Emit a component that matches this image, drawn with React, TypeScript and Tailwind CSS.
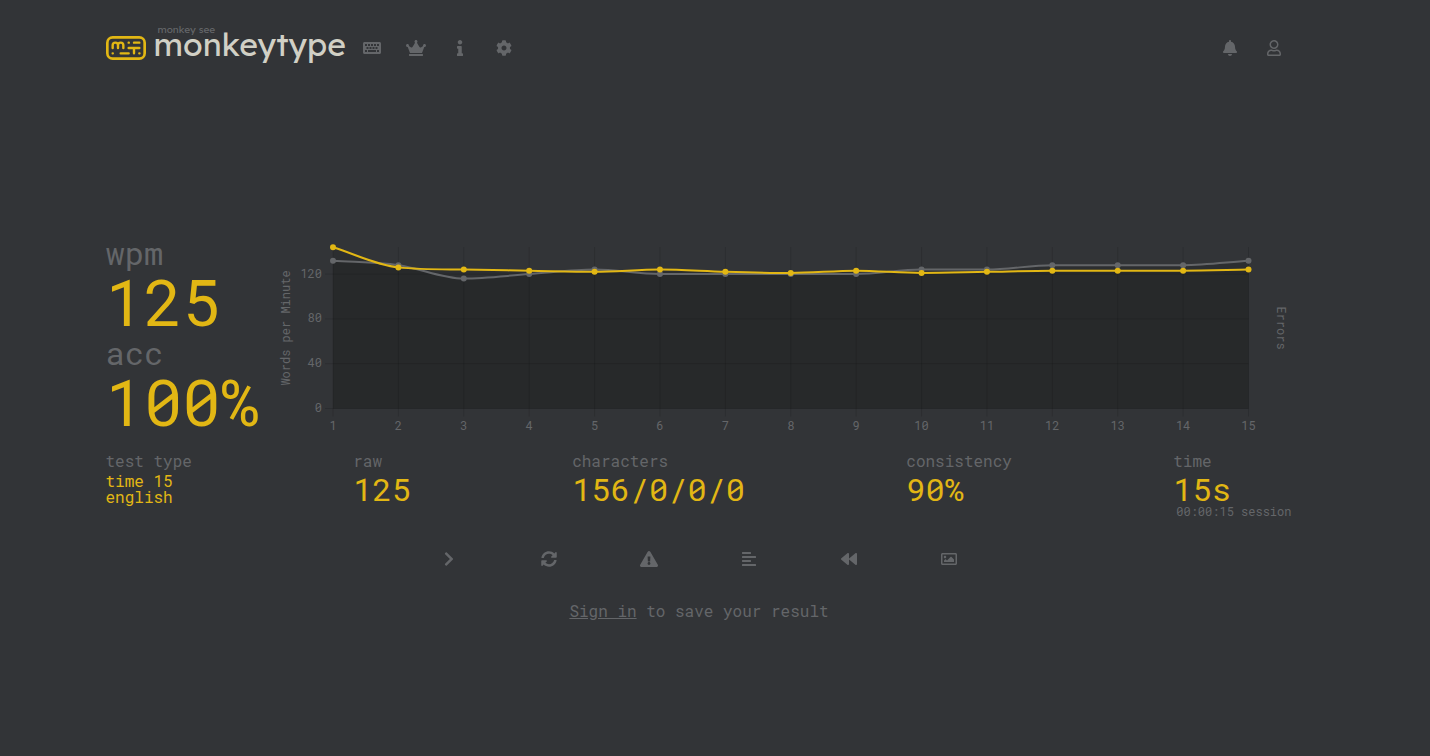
import { FaAlignLeft, FaBackward, FaBell, FaChevronRight, FaCog, FaCrown, FaExclamationTriangle, FaInfo, FaKeyboard, FaRegImage, FaRegUser, FaSyncAlt } from "react-icons/fa";
import type { IconType } from "react-icons";

interface NavItem {
  label: string;
  icon: IconType;
}

const mainNav: NavItem[] = [
  { label: "Start test", icon: FaKeyboard },
  { label: "Leaderboards", icon: FaCrown },
  { label: "About", icon: FaInfo },
  { label: "Settings", icon: FaCog }
];

const accountNav: NavItem[] = [
  { label: "Notifications", icon: FaBell },
  { label: "Account", icon: FaRegUser }
];

const actions: NavItem[] = [
  { label: "Next test", icon: FaChevronRight },
  { label: "Repeat test", icon: FaSyncAlt },
  { label: "Practice words", icon: FaExclamationTriangle },
  { label: "Toggle words history", icon: FaAlignLeft },
  { label: "Watch replay", icon: FaBackward },
  { label: "Copy screenshot", icon: FaRegImage }
];

const wpm = [144, 126, 124, 123, 122, 124, 122, 121, 123, 121, 122, 123, 123, 123, 124];
const raw = [132, 128, 116, 120, 124, 120, 120, 120, 120, 124, 124, 128, 128, 128, 132];

// Plot area inside the chart's viewBox
const LEFT = 57;
const RIGHT = 972.5;
const TOP = 6;
const BOTTOM = 167.5;

const xAt = (i: number) => LEFT + (i * (RIGHT - LEFT)) / (wpm.length - 1);
const yAt = (value: number) => BOTTOM - value * 1.12;

// Monotone cubic line, so the curve never overshoots a point
function linePath(values: number[]) {
  const step = xAt(1) - xAt(0);
  const ys = values.map(yAt);
  const slopes = ys.slice(1).map((y, i) => (y - ys[i]) / step);
  const tangents = ys.map((_, i) => {
    if (i === 0) return slopes[0];
    if (i === ys.length - 1) return slopes[i - 1];
    const a = slopes[i - 1];
    const b = slopes[i];
    return a * b <= 0 ? 0 : (a + b) / 2;
  });

  slopes.forEach((slope, i) => {
    if (slope === 0) {
      tangents[i] = 0;
      tangents[i + 1] = 0;
      return;
    }
    const alpha = tangents[i] / slope;
    const beta = tangents[i + 1] / slope;
    const size = Math.hypot(alpha, beta);
    if (size > 3) {
      tangents[i] = (alpha * 3 * slope) / size;
      tangents[i + 1] = (beta * 3 * slope) / size;
    }
  });

  let d = `M${xAt(0)},${ys[0]}`;
  for (let i = 1; i < ys.length; i++) {
    d += ` C${xAt(i - 1) + step / 3},${ys[i - 1] + (tangents[i - 1] * step) / 3}`;
    d += ` ${xAt(i) - step / 3},${ys[i] - (tangents[i] * step) / 3} ${xAt(i)},${ys[i]}`;
  }
  return d;
}

function Series({ values, color }: { values: number[]; color: string }) {
  return (
    <g>
      <path d={linePath(values)} fill="none" stroke={color} strokeWidth="2" />
      {values.map((value, i) => (
        <circle key={i} cx={xAt(i)} cy={yAt(value)} r="3" fill={color} />
      ))}
    </g>
  );
}

function ResultChart() {
  const close = `L${RIGHT},${BOTTOM} L${LEFT},${BOTTOM} Z`;

  return (
    <svg viewBox="0 0 1017 200" className="w-full" role="img" aria-label="Words per minute over time">
      <path d={`${linePath(raw)} ${close}`} fill="#0b0b0b" fillOpacity="0.13" />
      <path d={`${linePath(wpm)} ${close}`} fill="#0b0b0b" fillOpacity="0.13" />

      <g stroke="#000" strokeOpacity="0.12">
        {wpm.map((_, i) => (
          <line key={i} x1={xAt(i)} x2={xAt(i)} y1={TOP} y2={BOTTOM + 8} />
        ))}
        {[0, 40, 80, 120].map((tick) => (
          <line key={tick} x1={LEFT - 8} x2={RIGHT} y1={yAt(tick)} y2={yAt(tick)} />
        ))}
      </g>

      <Series values={raw} color="#646669" />
      <Series values={wpm} color="#e2b714" />

      <g fill="#646669" fontSize="12">
        {[0, 40, 80, 120].map((tick) => (
          <text key={tick} x={LEFT - 11} y={yAt(tick) + 3.5} textAnchor="end">{tick}</text>
        ))}
        {wpm.map((_, i) => (
          <text key={i} x={xAt(i)} y="189" textAnchor="middle">{i + 1}</text>
        ))}
        <text transform="translate(14 87) rotate(-90)" textAnchor="middle">Words per Minute</text>
        <text transform="translate(1001 87) rotate(90)" textAnchor="middle">Errors</text>
      </g>
    </svg>
  );
}

function Logo() {
  return (
    <svg viewBox="0 0 300 180" className="h-6 w-10" fill="none" stroke="#e2b714" strokeWidth="18" strokeLinecap="round" strokeLinejoin="round" aria-hidden="true">
      <rect x="10" y="10" width="280" height="160" rx="40" strokeWidth="20" />
      <path d="M50 90V70Q50 50 70 50Q90 50 90 70V90M90 70Q90 50 110 50Q130 50 130 70V90" />
      <path d="M170 50H171M210 50H250M170 90H250M210 90V130M50 130H51M110 130H170M250 130H251" />
    </svg>
  );
}

function Stat({ label, value, note }: { label: string; value: string; note?: string }) {
  return (
    <div>
      <div className="text-base leading-5">{label}</div>
      <div className="text-[32px] leading-9 text-[#e2b714]">{value}</div>
      {note && <div className="pl-[3px] pr-px text-xs leading-2">{note}</div>}
    </div>
  );
}

function IconButton({ item, className }: { item: NavItem; className: string }) {
  const Icon = item.icon;
  return (
    <button type="button" aria-label={item.label} className={`flex items-center justify-center ${className}`}>
      <Icon className="h-4 w-5" />
    </button>
  );
}

export default function App() {
  return (
    <div className="min-h-screen bg-[#323437] pr-8 font-['Roboto_Mono','DejaVu_Sans_Mono',monospace] text-[#646669]">
      <div className="mx-auto max-w-[1187px]">
        <header className="flex items-center gap-[7px] pt-6">
          <a href="#" className="flex items-end gap-2 font-['Lexend_Deca',Inter,sans-serif]">
            <Logo />
            <span className="flex flex-col pb-2">
              <span className="pl-1 text-[10px] leading-3">monkey see</span>
              <span className="text-[32px] leading-4 text-[#d1d0c5]">monkeytype</span>
            </span>
          </a>
          <nav className="flex grow gap-1.5 pt-3">
            {mainNav.map((item) => (
              <IconButton key={item.label} item={item} className="w-[38px]" />
            ))}
          </nav>
          <nav className="flex gap-1.5 pt-3">
            {accountNav.map((item) => (
              <IconButton key={item.label} item={item} className="w-[38px]" />
            ))}
          </nav>
        </header>

        <main className="pt-[181px]">
          <section className="flex">
            <dl className="w-[170px] shrink-0">
              <dt className="text-[32px] leading-6">wpm</dt>
              <dd className="mb-1 text-[64px] leading-[72px] text-[#e2b714]">125</dd>
              <dt className="text-[32px] leading-6">acc</dt>
              <dd className="mb-1 text-[64px] leading-[72px] text-[#e2b714]">100%</dd>
            </dl>
            <div className="min-w-0 grow">
              <ResultChart />
            </div>
          </section>

          <section className="flex justify-between pt-2.5">
            <div>
              <div className="text-base leading-5">test type</div>
              <div className="mt-0.5 text-base leading-4 text-[#e2b714]">
                time 15
                <br />
                english
              </div>
            </div>
            <Stat label="raw" value="125" />
            <Stat label="characters" value="156/0/0/0" />
            <Stat label="consistency" value="90%" />
            <Stat label="time" value="15s" note="00:00:15 session" />
          </section>

          <div className="flex justify-center pt-7">
            {actions.map((item) => (
              <IconButton key={item.label} item={item} className="h-8 w-[100px]" />
            ))}
          </div>

          <p className="pt-6 text-center">
            <a href="#" className="underline">Sign in</a> to save your result
          </p>
        </main>
      </div>
    </div>
  );
}
